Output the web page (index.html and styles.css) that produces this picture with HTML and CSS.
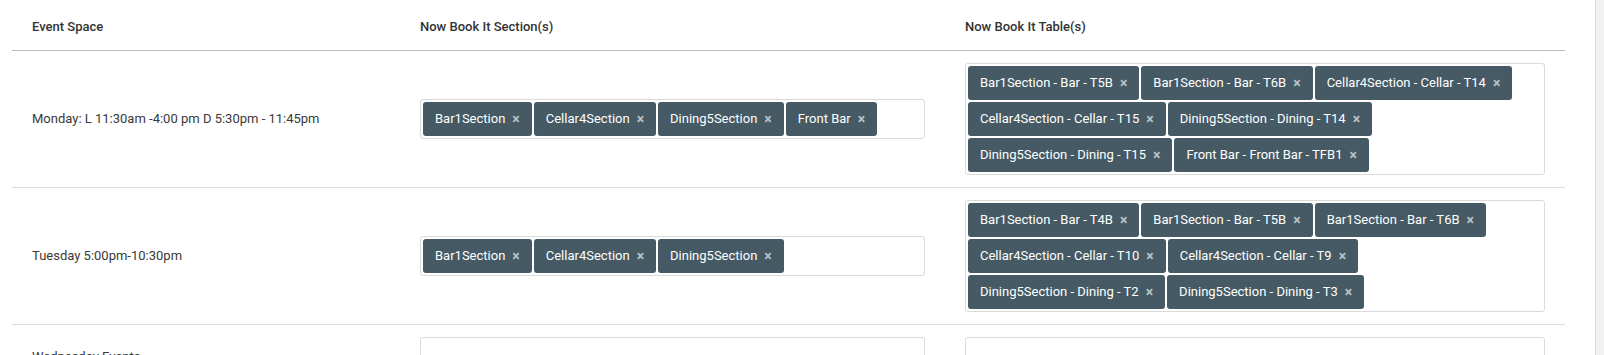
FILE: index.html
```html
<!DOCTYPE html>
<html lang="en">
<head>
  <meta charset="UTF-8" />
  <title>Event Spaces</title>
  <link rel="stylesheet" href="styles.css">
</head>
<body>
  <div class="page">
    <table class="spaces">
      <thead>
        <tr>
          <th class="col-space">Event Space</th>
          <th class="col-sections">Now Book It Section(s)</th>
          <th class="col-tables">Now Book It Table(s)</th>
        </tr>
      </thead>
      <tbody>
        <tr>
          <td>Monday: L 11:30am -4:00 pm D 5:30pm - 11:45pm</td>
          <td>
            <div class="picker">
              <span class="tag">Bar1Section <b>×</b></span>
              <span class="tag">Cellar4Section <b>×</b></span>
              <span class="tag">Dining5Section <b>×</b></span>
              <span class="tag">Front Bar <b>×</b></span>
            </div>
          </td>
          <td>
            <div class="picker">
              <span class="tag">Bar1Section - Bar - T5B <b>×</b></span>
              <span class="tag">Bar1Section - Bar - T6B <b>×</b></span>
              <span class="tag">Cellar4Section - Cellar - T14 <b>×</b></span>
              <span class="tag">Cellar4Section - Cellar - T15 <b>×</b></span>
              <span class="tag">Dining5Section - Dining - T14 <b>×</b></span>
              <span class="tag">Dining5Section - Dining - T15 <b>×</b></span>
              <span class="tag">Front Bar - Front Bar - TFB1 <b>×</b></span>
            </div>
          </td>
        </tr>
        <tr>
          <td>Tuesday 5:00pm-10:30pm</td>
          <td>
            <div class="picker">
              <span class="tag">Bar1Section <b>×</b></span>
              <span class="tag">Cellar4Section <b>×</b></span>
              <span class="tag">Dining5Section <b>×</b></span>
            </div>
          </td>
          <td>
            <div class="picker">
              <span class="tag">Bar1Section - Bar - T4B <b>×</b></span>
              <span class="tag">Bar1Section - Bar - T5B <b>×</b></span>
              <span class="tag">Bar1Section - Bar - T6B <b>×</b></span>
              <span class="tag">Cellar4Section - Cellar - T10 <b>×</b></span>
              <span class="tag">Cellar4Section - Cellar - T9 <b>×</b></span>
              <span class="tag">Dining5Section - Dining - T2 <b>×</b></span>
              <span class="tag">Dining5Section - Dining - T3 <b>×</b></span>
            </div>
          </td>
        </tr>
        <tr>
          <td>Wednesday Events</td>
          <td><div class="picker empty"></div></td>
          <td><div class="picker empty"></div></td>
        </tr>
      </tbody>
    </table>
  </div>
  <div class="scrollbar"></div>
</body>
</html>
```

FILE: styles.css
```css
html, body {
  margin: 0;
  height: 100%;
  overflow: hidden;
}
body {
  display: flex;
  font-family: Roboto, "Liberation Sans", sans-serif;
  font-size: 13px;
  color: #333;
  background: #fff;
}
.page {
  flex: 1;
  padding: 0 30px 0 12px;
}
.scrollbar {
  width: 8px;
  height: 100vh;
  background: #f1f1f1;
  border-left: 1px solid #dcdcdc;
}
.spaces {
  width: 1553px;
  border-collapse: collapse;
  table-layout: fixed;
}
/* widths are content widths, padding comes on top */
.col-space {
  width: 348px;
}
.col-sections {
  width: 505px;
}
.spaces th {
  text-align: left;
  font-weight: 500;
  line-height: 18px;
  padding: 18px 20px 14px;
  border-bottom: 1px solid #bbb;
  color: #333;
}
.spaces td {
  padding: 12px 20px;
  line-height: 18px;
  vertical-align: middle;
  border-bottom: 1px solid #ddd;
  color: #3a3a3a;
}
.picker {
  display: flex;
  flex-wrap: wrap;
  gap: 2px;
  padding: 2px;
  border: 1px solid #dadada;
  border-radius: 3px;
  background: #fff;
}
.picker.empty {
  height: 33px;
}
.tag {
  display: inline-flex;
  align-items: center;
  height: 34px;
  padding: 0 12px;
  background: #455a64;
  color: #fff;
  border-radius: 3px;
  white-space: nowrap;
}
.tag b {
  margin-left: 7px;
  color: #b9c2c6;
  font-size: 14px;
  font-weight: 700;
}
```
